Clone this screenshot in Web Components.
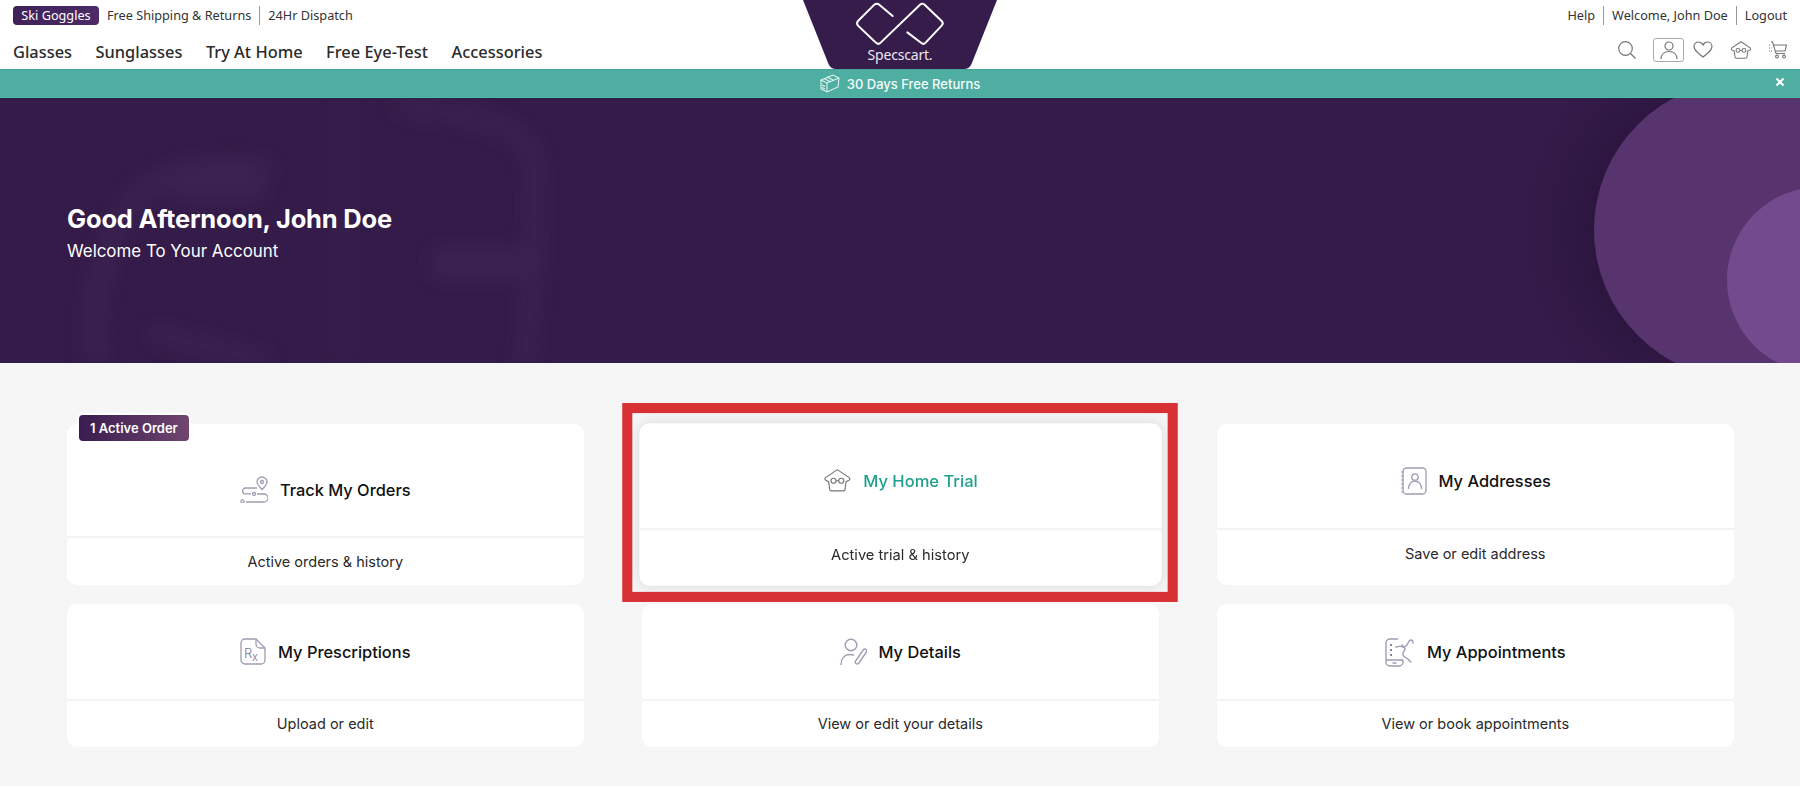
<!DOCTYPE html>
<html lang="en">
<head>
<meta charset="utf-8">
<title>Specscart - My Account</title>
<style>
  html, body { margin: 0; height: 786px; overflow: hidden; background: #f6f6f6; }
  body { font-family: "Inter", "Liberation Sans", sans-serif; color: #222; }
  svg { display: block; }
</style>
</head>
<body>

<site-header></site-header>
<promo-bar>30 Days Free Returns</promo-bar>
<account-hero>
  <span slot="title">Good Afternoon, John Doe</span>
  <span slot="sub">Welcome To Your Account</span>
</account-hero>

<account-grid>
  <account-card top="114" shift="19" pad="14" badge="1 Active Order">
    <svg slot="icon" width="28" height="27" viewBox="0 0 28 27" fill="none" stroke="#a39bb3" stroke-width="1.3">
      <path d="M22 13.5c-3-3-5-5-5-7.5a5 5 0 0 1 10 0c0 2.5-2 4.5-5 7.5z"/>
      <circle cx="22" cy="6" r="1.5"/>
      <path d="M17 12H5.5a2.8 2.8 0 0 0 0 5.8H11"/>
      <circle cx="14" cy="18" r="1.5"/>
      <path d="M17 18h7a4 4 0 0 1 0 8H6"/>
      <circle cx="2.5" cy="25.5" r="1.6"/>
    </svg>
    <span>Track My Orders</span>
    <span slot="sub">Active orders &amp; history</span>
  </account-card>

  <account-card top="106" shift="9" pad="14" hovered>
    <svg slot="icon" width="28" height="23" viewBox="0 0 28 24" fill="none" stroke="#777" stroke-width="1.2">
      <path d="M14 1l12.5 8.5q1 1.5-.5 2.5l-3 1.5-1 7.5q0 2-2 2H8q-2 0-2-2l-1-7.5-3-1.5q-1.5-1-.5-2.5z"/>
      <circle cx="10" cy="12.5" r="2.6"/>
      <circle cx="18" cy="12.5" r="2.6"/>
      <path d="M12.6 12.5h2.8"/>
    </svg>
    <span>My Home Trial</span>
    <span slot="sub">Active trial &amp; history</span>
  </account-card>

  <account-card top="106" shift="9" pad="14">
    <svg slot="icon" width="27" height="28" viewBox="0 0 27 28" fill="none" stroke="#a39bb3" stroke-width="1.3">
      <rect x="3" y="1" width="23" height="26" rx="3.5"/>
      <path d="M1 5h3M1 9h3M1 13h3M1 17h3M1 21h3M1 25h3" stroke-width="1"/>
      <circle cx="15" cy="10" r="3.2"/>
      <path d="M8.5 22c0-5 3-8 6.5-8s6.500 3 6.500 8"/>
    </svg>
    <span>My Addresses</span>
    <span slot="sub">Save or edit address</span>
  </account-card>

  <account-card top="97">
    <svg slot="icon" width="26" height="27" viewBox="0 0 26 27" fill="none" stroke="#a39bb3" stroke-width="1.3">
      <path d="M5 1h11l9 9v12a4 4 0 0 1-4 4H5a4 4 0 0 1-4-4V5a4 4 0 0 1 4-4z"/>
      <path d="M16 1v5a4 4 0 0 0 4 4h5"/>
      <text x="4" y="20" font-family="Inter, sans-serif" font-size="13" font-weight="300" fill="#7f7396" stroke="none">R</text>
      <text x="12" y="23" font-family="Inter, sans-serif" font-size="11" font-weight="300" fill="#7f7396" stroke="none">x</text>
    </svg>
    <span>My Prescriptions</span>
    <span slot="sub">Upload or edit</span>
  </account-card>

  <account-card top="97">
    <svg slot="icon" width="27" height="28" viewBox="0 0 27 28" fill="none" stroke="#a39bb3" stroke-width="1.4">
      <circle cx="11" cy="7" r="5.8"/>
      <path d="M1 27c0-6.5 3.5-10.5 9-10.5 1.5 0 2.8.3 4 .8"/>
      <path d="M23.5 11.5a2 2 0 0 1 3 2.5l-8 11.5a2 2 0 0 1-3-2.5z"/>
    </svg>
    <span>My Details</span>
    <span slot="sub">View or edit your details</span>
  </account-card>

  <account-card top="97">
    <svg slot="icon" width="30" height="30" viewBox="0 0 30 30" fill="none" stroke="#a39bb3" stroke-width="1.4">
      <path d="M13 2H5a4 4 0 0 0-4 4v19a4 4 0 0 0 4 4h9a4 4 0 0 0 4-4v-2"/>
      <path d="M1 23h17M7.5 26h4"/>
      <path d="M6 8h.1M6 13h.1M6 18h.1" stroke="#6f6488" stroke-width="2" stroke-linecap="round"/>
      <path d="M17 8c2 3 3 2 5 0 1-2 2-5 4-5s2 2 2 3M11 10c3-1 9-1 9 2 0 2-3 3-2 6 1 3 4 3 5 4s2 3 3 3" stroke-linecap="round"/>
    </svg>
    <span>My Appointments</span>
    <span slot="sub">View or book appointments</span>
  </account-card>
</account-grid>

<script>
class SiteHeader extends HTMLElement {
  constructor() {
    super();
    this.attachShadow({ mode: 'open' });
  }

  connectedCallback() {
    const links = ['Glasses', 'Sunglasses', 'Try At Home', 'Free Eye-Test', 'Accessories'];
    this.shadowRoot.innerHTML = `
      <style>
        :host {
          display: block;
          position: relative;
          height: 69px;
          background: #fff;
          font-family: "Noto Sans", "Open Sans", sans-serif;
          color: #333;
        }
        .top, .main {
          display: flex;
          justify-content: space-between;
          align-items: center;
          padding: 0 13px 0 13px;
        }
        .top { height: 30px; font-size: 12.7px; }
        .main { height: 39px; box-sizing: border-box; }
        .left, .right { display: flex; align-items: center; }
        .pill {
          background: linear-gradient(90deg, #3f2158, #4c2b66);
          color: #fff;
          border-radius: 4px;
          padding: 0 7px;
          height: 19px;
          line-height: 19px;
          width: 72px;
          text-align: center;
          margin-right: 8px;
        }
        .sep { width: 1px; height: 19px; background: #999; margin: 0 8px; }
        nav { display: flex; gap: 23.5px; margin-top: 3px; font-size: 16.4px; font-weight: 500; color: #2b2b2b; }
        .icons { display: flex; align-items: center; }
        .user {
          border: 1.5px solid #aaa;
          border-radius: 3px;
          width: 29px;
          height: 22px;
          display: flex;
          align-items: center;
          justify-content: center;
          margin: 0 9px 0 17px;
        }
        .logo { position: absolute; left: 50%; top: 0; transform: translateX(-50%); width: 194px; height: 69px; }
        .logo span {
          position: absolute;
          left: 0;
          right: 0;
          top: 46px;
          text-align: center;
          color: #ece6f0;
          font-size: 14px;
          line-height: 18px;
          letter-spacing: -.2px;
        }
      </style>
      <div class="top">
        <div class="left">
          <span class="pill">Ski Goggles</span>
          <span>Free Shipping &amp; Returns</span>
          <span class="sep"></span>
          <span>24Hr Dispatch</span>
        </div>
        <div class="right">
          <span>Help</span><span class="sep"></span>
          <span>Welcome, John Doe</span><span class="sep"></span>
          <span>Logout</span>
        </div>
      </div>
      <div class="main">
        <nav>${links.map(link => `<span>${link}</span>`).join('')}</nav>
        <div class="icons">
          <svg width="18" height="18" viewBox="0 0 18 18" fill="none" stroke="#777" stroke-width="1.2">
            <circle cx="7.5" cy="7.5" r="6.8"/><path d="M12.5 12.5l5 5"/>
          </svg>
          <div class="user">
            <svg width="18" height="18" viewBox="0 0 18 18" fill="none" stroke="#777" stroke-width="1.2">
              <circle cx="9" cy="5" r="4"/><path d="M1 18c0-5 3.5-7.5 8-7.5s8 2.5 8 7.5"/>
            </svg>
          </div>
          <svg width="20" height="17" viewBox="0 0 20 17" fill="none" stroke="#777" stroke-width="1.2">
            <path d="M10 16C4 11.5 1 9 1 5.5 1 3 3 1 5.3 1 7.3 1 9 2 10 4c1-2 2.7-3 4.7-3C17 1 19 3 19 5.5 19 9 16 11.5 10 16z"/>
          </svg>
          <svg style="margin-left:17px" width="22" height="18" viewBox="0 0 28 24" fill="none" stroke="#777" stroke-width="1.4">
            <path d="M14 1l12.5 8.5q1 1.5-.5 2.5l-3 1.5-1 7.5q0 2-2 2H8q-2 0-2-2l-1-7.5-3-1.5q-1.5-1-.5-2.5z"/>
            <circle cx="10" cy="12.5" r="2.6"/><circle cx="18" cy="12.5" r="2.6"/><path d="M12.6 12.5h2.8"/>
          </svg>
          <svg style="margin-left:17px" width="18" height="18" viewBox="0 0 18 18" fill="none" stroke="#777" stroke-width="1.1">
            <path d="M2 1h1.5L7 12.5h9"/>
            <path d="M4.5 4H17.5l-1.5 6H6.5"/>
            <path d="M0 4h2M0 7h2.5M0 10h3" stroke-dasharray="1 1"/>
            <circle cx="8" cy="15.5" r="1.4"/><circle cx="15" cy="15.5" r="1.4"/>
          </svg>
        </div>
      </div>
      <div class="logo">
        <svg width="194" height="69" viewBox="0 0 194 69">
          <path d="M0 0H194L168.5 64Q166.5 69 161 69H33Q27.5 69 25.5 64Z" fill="#361c4b"/>
          <g transform="translate(-43 0) scale(.3333)" fill="none" stroke="#fff" stroke-width="6" stroke-linecap="round">
            <path d="M398 48L358 14Q350 8 343 14L294 63Q288 70 294 77L348 128Q355 135 362 128L480 14Q487 8 494 14L545 63Q552 70 545 77L497 128Q490 135 483 128L442 97"/>
          </g>
        </svg>
        <span>Specscart.</span>
      </div>
    `;
  }
}

class PromoBar extends HTMLElement {
  constructor() {
    super();
    this.attachShadow({ mode: 'open' });
    this.shadowRoot.innerHTML = `
      <style>
        :host {
          display: flex;
          position: relative;
          height: 29px;
          box-sizing: border-box;
          align-items: center;
          justify-content: center;
          gap: 7px;
          background: #4eaea1;
          border-top: 1px solid #45a596;
          border-bottom: 1px solid #4cbaa6;
          color: #f4fbfa;
          font: 500 13px "Inter", sans-serif;
        }
        .close { position: absolute; right: 15px; top: 7px; }
      </style>
      <svg width="20" height="19" viewBox="0 0 20 19" fill="none" stroke="#e3f3f0" stroke-width="1.1">
        <path d="M1 6l12-5 6 3-1 9-11 5-6-3z"/>
        <path d="M1 6l6 3 12-5M7 9v9M4 4.5l6 3M7 3l6 3"/>
        <path d="M2 11l3 1.5M2 13.5l3 1.5"/>
      </svg>
      <span><slot></slot></span>
      <svg class="close" width="10" height="10" viewBox="0 0 10 10" stroke="#fff" stroke-width="2">
        <path d="M1.5 1.5l7 7M8.5 1.5l-7 7"/>
      </svg>
    `;
  }
}

class AccountHero extends HTMLElement {
  constructor() {
    super();
    this.attachShadow({ mode: 'open' });
    this.shadowRoot.innerHTML = `
      <style>
        :host {
          display: flex;
          flex-direction: column;
          justify-content: center;
          position: relative;
          overflow: hidden;
          height: 265px;
          box-sizing: border-box;
          padding: 3px 0 0 67px;
          background: #341b49;
          color: #fff;
        }
        .ghost { position: absolute; left: 0; top: 0; }
        .circle { position: absolute; border-radius: 50%; }
        .big { left: 1594px; top: -17px; width: 298px; height: 298px; background: #58346f; box-shadow: -25px 0 40px rgba(30, 14, 44, .35); }
        .small { left: 1727px; top: 89px; width: 186px; height: 186px; background: #744a8f; }
        .title { position: relative; font-size: 25.5px; font-weight: 700; line-height: 34px; letter-spacing: -.2px; }
        .sub { position: relative; font-size: 16.9px; line-height: 24px; margin-top: 3px; }
      </style>
      <svg class="ghost" width="620" height="265" viewBox="0 0 620 265" fill="none">
        <defs><filter id="soft" x="-20%" y="-20%" width="140%" height="140%"><feGaussianBlur stdDeviation="10"/></filter></defs>
        <g filter="url(#soft)" stroke="#4a2d60" opacity=".38">
          <path d="M96 265C88 190 110 100 170 78c30-10 70-12 100-4" stroke-width="18"/>
          <path d="M175 88h88" stroke-width="26"/>
          <path d="M344 0v265" stroke-width="8"/>
          <path d="M395 8c50 6 110 14 135 38 10 40 2 180-8 225" stroke-width="14"/>
          <path d="M432 165h100" stroke-width="28"/>
          <path d="M150 235c40 10 90 20 120 30" stroke-width="14"/>
        </g>
      </svg>
      <div class="circle big"></div>
      <div class="circle small"></div>
      <div class="title"><slot name="title"></slot></div>
      <div class="sub"><slot name="sub"></slot></div>
    `;
  }
}

class AccountGrid extends HTMLElement {
  constructor() {
    super();
    this.attachShadow({ mode: 'open' });
    this.shadowRoot.innerHTML = `
      <style>
        :host {
          display: grid;
          grid-template-columns: repeat(3, 516.5px);
          grid-template-rows: 161px 143px;
          column-gap: 58.5px;
          row-gap: 19px;
          padding: 61px 0 0 67px;
        }
      </style>
      <slot></slot>
    `;
  }
}

class AccountCard extends HTMLElement {
  constructor() {
    super();
    this.attachShadow({ mode: 'open' });
  }

  connectedCallback() {
    const top = this.getAttribute('top') || 97;
    const shift = this.getAttribute('shift') || 0;
    const pad = this.getAttribute('pad') || 13;
    const badge = this.getAttribute('badge');
    this.shadowRoot.innerHTML = `
      <style>
        :host {
          display: flex;
          flex-direction: column;
          position: relative;
          background: #fff;
          border-radius: 10px;
          font-family: "Inter", sans-serif;
        }
        .head {
          display: flex;
          align-items: center;
          justify-content: center;
          gap: 12px;
          box-sizing: border-box;
          height: ${top}px;
          padding-top: ${shift}px;
          border-bottom: 2px solid #f3f3f3;
          font-size: 16.4px;
          font-weight: 500;
          color: #111;
        }
        .sub {
          flex: 1;
          padding-top: ${pad}px;
          text-align: center;
          font-size: 14.5px;
          line-height: 20px;
          color: #2a2a2a;
        }
        .badge {
          position: absolute;
          left: 10px;
          top: -11px;
          padding: 0 11px;
          height: 26px;
          line-height: 26px;
          border: 2px solid #fff;
          border-radius: 6px;
          background: linear-gradient(90deg, #3a1c50, #70466f);
          color: #fff;
          font-size: 13px;
          font-weight: 600;
        }
        :host([hovered]) { transform: scale(1.01); box-shadow: 0 0 14px rgba(0, 0, 0, .12); }
        :host([hovered]) .head { color: #1fa08c; }
        .frame {
          position: absolute;
          left: -16.8px;
          right: -16.8px;
          top: -20px;
          bottom: -16px;
          border: 10px solid #d73136;
          pointer-events: none;
        }
      </style>
      ${badge ? `<div class="badge">${badge}</div>` : ''}
      <div class="head"><slot name="icon"></slot><span><slot></slot></span></div>
      <div class="sub"><slot name="sub"></slot></div>
      ${this.hasAttribute('hovered') ? '<div class="frame"></div>' : ''}
    `;
  }
}

customElements.define('site-header', SiteHeader);
customElements.define('promo-bar', PromoBar);
customElements.define('account-hero', AccountHero);
customElements.define('account-grid', AccountGrid);
customElements.define('account-card', AccountCard);
</script>
</body>
</html>
